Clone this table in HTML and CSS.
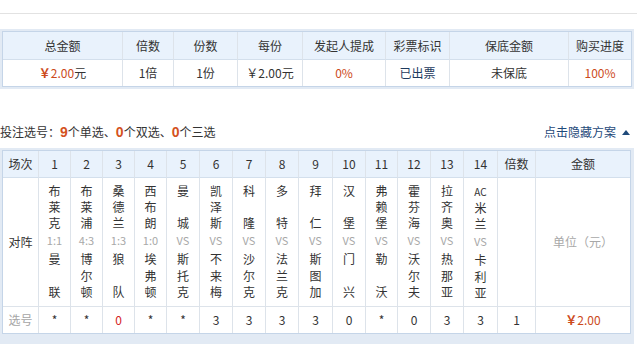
FILE: index.html
```html
<!DOCTYPE html>
<html>
<head>
<meta charset="utf-8">
<link rel="stylesheet" href="styles.css">
</head>
<body>
<div class="topbar"></div>
<div class="wrap wrap1">
  <table class="t1">
    <colgroup><col><col><col><col><col><col><col><col></colgroup>
    <tr class="head">
      <th>总金额</th><th>倍数</th><th>份数</th><th>每份</th><th>发起人提成</th><th>彩票标识</th><th>保底金额</th><th>购买进度</th>
    </tr>
    <tr class="data">
      <td><span class="orange"><b class="yen">￥</b>2.00</span>元</td>
      <td>1倍</td>
      <td>1份</td>
      <td>￥2.00元</td>
      <td class="orange">0%</td>
      <td class="navy">已出票</td>
      <td>未保底</td>
      <td class="orange">100%</td>
    </tr>
  </table>
</div>

<div class="info">
  <div class="sel">投注选号：<b class="num">9</b>个单选、<b class="num">0</b>个双选、<b class="num">0</b>个三选</div>
  <div class="toggle">点击隐藏方案 <span class="tri"></span></div>
</div>

<div class="wrap wrap2">
  <table class="t2">
    <colgroup><col><col><col><col><col><col><col><col><col><col><col><col><col><col><col><col><col></colgroup>
    <tr class="head">
      <th>场次</th><th>1</th><th>2</th><th>3</th><th>4</th><th>5</th><th>6</th><th>7</th><th>8</th><th>9</th><th>10</th><th>11</th><th>12</th><th>13</th><th>14</th><th>倍数</th><th>金额</th>
    </tr>
    <tr class="match">
      <td class="lab">对阵</td>
      <td><div class="home">布<br>莱<br>克</div><div class="vs">1:1</div><div class="away">曼<br><br>联</div></td>
      <td><div class="home">布<br>莱<br>浦</div><div class="vs">4:3</div><div class="away">博<br>尔<br>顿</div></td>
      <td><div class="home">桑<br>德<br>兰</div><div class="vs">1:3</div><div class="away">狼<br><br>队</div></td>
      <td><div class="home">西<br>布<br>朗</div><div class="vs">1:0</div><div class="away">埃<br>弗<br>顿</div></td>
      <td><div class="home">曼<br><br>城</div><div class="vs">VS</div><div class="away">斯<br>托<br>克</div></td>
      <td><div class="home">凯<br>泽<br>斯</div><div class="vs">VS</div><div class="away">不<br>来<br>梅</div></td>
      <td><div class="home">科<br><br>隆</div><div class="vs">VS</div><div class="away">沙<br>尔<br>克</div></td>
      <td><div class="home">多<br><br>特</div><div class="vs">VS</div><div class="away">法<br>兰<br>克</div></td>
      <td><div class="home">拜<br><br>仁</div><div class="vs">VS</div><div class="away">斯<br>图<br>加</div></td>
      <td><div class="home">汉<br><br>堡</div><div class="vs">VS</div><div class="away">门<br><br>兴</div></td>
      <td><div class="home">弗<br>赖<br>堡</div><div class="vs">VS</div><div class="away">勒<br><br>沃</div></td>
      <td><div class="home">霍<br>芬<br>海</div><div class="vs">VS</div><div class="away">沃<br>尔<br>夫</div></td>
      <td><div class="home">拉<br>齐<br>奥</div><div class="vs">VS</div><div class="away">热<br>那<br>亚</div></td>
      <td><div class="home"><span class="ac">AC</span><br>米<br>兰</div><div class="vs">VS</div><div class="away">卡<br>利<br>亚</div></td>
      <td></td>
      <td class="unit">单位（元）</td>
    </tr>
    <tr class="pick">
      <td class="lab gray">选号</td>
      <td>*</td><td>*</td><td class="red">0</td><td>*</td><td>*</td><td>3</td><td>3</td><td>3</td><td>3</td><td>0</td><td>*</td><td>0</td><td>3</td><td>3</td>
      <td>1</td>
      <td class="orange"><b class="yen">￥</b>2.00</td>
    </tr>
  </table>
</div>
</body>
</html>
```

FILE: styles.css
```css
html, body {
  margin: 0;
  padding: 0;
  background: #fff;
}
body {
  font-family: "Noto Sans CJK SC", "Noto Sans", sans-serif;
  font-size: 12px;
  color: #333;
  width: 637px;
  overflow: hidden;
}
.topbar {
  height: 13px;
  border-bottom: 1px solid #e2e2e2;
}
.wrap {
  width: 634px;
  box-sizing: border-box;
  background: #e2eaf4;
  padding: 2px 3px 2px 2px;
}
.wrap1 {
  margin-top: 15px;
}
.wrap2 {
  margin-top: 6px;
  padding-bottom: 12px;
}
table {
  border-collapse: separate;
  border-spacing: 0;
  table-layout: fixed;
  border: 1px solid #c5d5e8;
  background: #fff;
}
.t1 { width: 630px; }
.t2 { width: 629px; }
th, td {
  padding: 0;
  text-align: center;
  font-weight: normal;
  font-size: 12px;
  border-right: 1px solid #dde3ea;
  border-bottom: 1px solid #dde3ea;
  line-height: 16px;
  box-sizing: border-box;
}
tr > :last-child { border-right: none; }
tr:last-child > * { border-bottom: none; }
.head th {
  background: #e9f2fc;
  border-bottom-color: #d3dfec;
}
.t1 .head th { height: 28px; }
.t1 .data td { height: 26px; }

.t1 col:nth-child(1) { width: 120px; }
.t1 col:nth-child(2) { width: 51px; }
.t1 col:nth-child(3) { width: 64px; }
.t1 col:nth-child(4) { width: 65px; }
.t1 col:nth-child(5) { width: 83px; }
.t1 col:nth-child(6) { width: 64px; }
.t1 col:nth-child(7) { width: 119px; }
.t1 col:nth-child(8) { width: 62px; }

.t2 col:nth-child(1) { width: 36px; }
.t2 col:nth-child(2),
.t2 col:nth-child(3),
.t2 col:nth-child(4),
.t2 col:nth-child(5) { width: 32px; }
.t2 col:nth-child(6),
.t2 col:nth-child(7),
.t2 col:nth-child(8),
.t2 col:nth-child(9) { width: 33px; }
.t2 col:nth-child(10) { width: 34px; }
.t2 col:nth-child(11) { width: 33px; }
.t2 col:nth-child(12) { width: 32px; }
.t2 col:nth-child(13) { width: 33px; }
.t2 col:nth-child(14) { width: 33px; }
.t2 col:nth-child(15) { width: 34px; }
.t2 col:nth-child(16) { width: 38px; }
.t2 col:nth-child(17) { width: 94px; }

.t2 .head th { height: 27px; }
.t2 .match td {
  height: 129px;
  vertical-align: top;
  padding-top: 5px;
}
.t2 .match td.lab,
.t2 .match td.unit {
  vertical-align: middle;
  padding-top: 0;
}
.home { line-height: 16px; }
.vs {
  margin-top: 2px;
  line-height: 15px;
  color: #a8a8a8;
  font-size: 11px;
}
.away {
  margin-top: 3px;
  line-height: 16.5px;
}
.ac { font-size: 10px; }
.unit { color: #a8a8a8; }
.t2 .pick td { height: 26px; }
.gray { color: #a5a5a5; }

.orange { color: #cc4a1c; }
.red { color: #d42222; }
.navy { color: #1d3a5e; }
.yen { font-weight: bold; }

.info {
  margin-top: 33px;
  height: 20px;
  line-height: 20px;
  display: flex;
  justify-content: space-between;
  align-items: center;
  width: 634px;
}
.sel {
  font-size: 12px;
  color: #333;
}
.num {
  font-family: "Liberation Sans", Arial, sans-serif;
  font-size: 14px;
  font-weight: bold;
  color: #d4521e;
}
.toggle {
  color: #1f4a7a;
  font-size: 12px;
  display: flex;
  align-items: center;
  gap: 6px;
  margin-right: 4px;
}
.tri {
  width: 0;
  height: 0;
  border-left: 4px solid transparent;
  border-right: 4px solid transparent;
  border-bottom: 5px solid #1f4a7a;
}
```
